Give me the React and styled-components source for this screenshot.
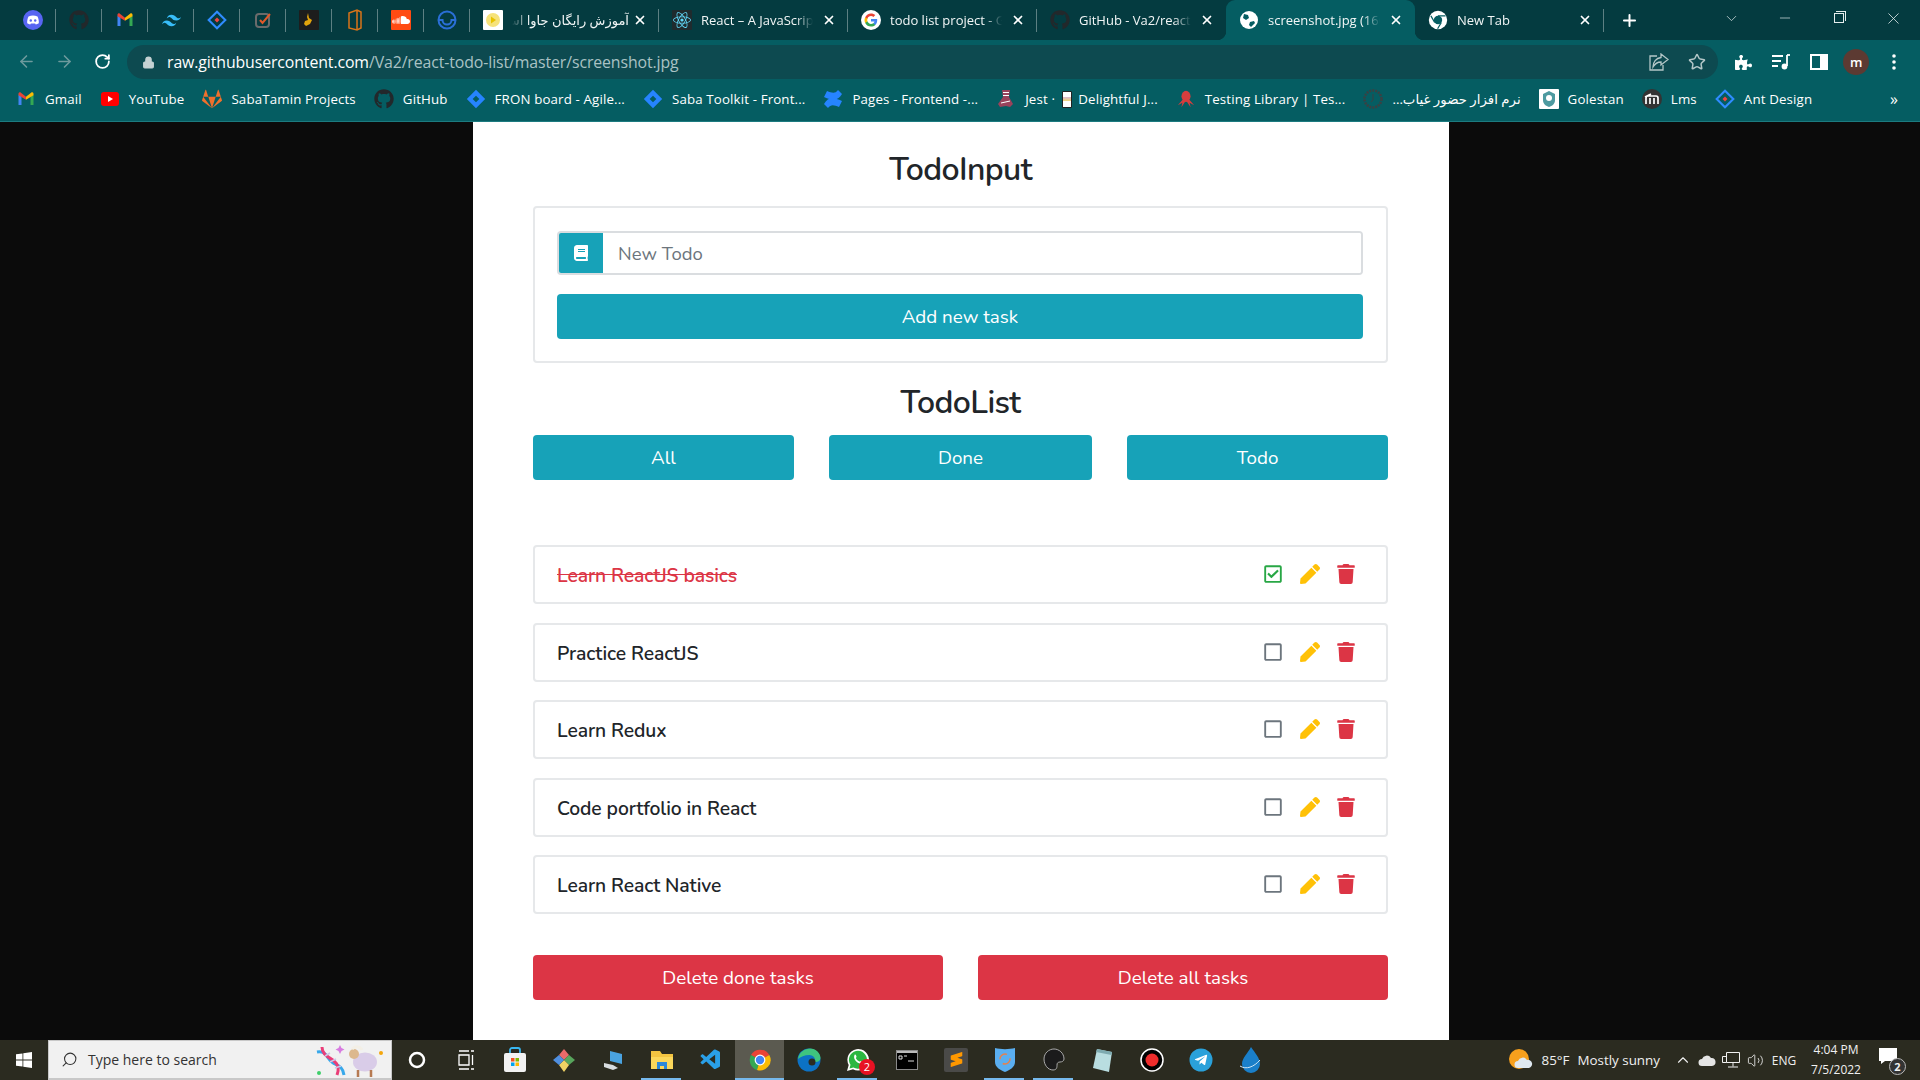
import React from 'react';
import styled, { createGlobalStyle, css } from 'styled-components';
import { FaBook, FaPen, FaTrash, FaRegSquare, FaRegCheckSquare, FaGithub, FaReact, FaGitlab, FaPuzzlePiece, FaTelegramPlane } from 'react-icons/fa';
import { SiTailwindcss, SiSoundcloud, SiSublimetext } from 'react-icons/si';
import { VscVscode } from 'react-icons/vsc';
import { ArrowLeft, ArrowRight, RotateCw, Lock, Star, Search, ChevronDown, ChevronUp, Minus, X, Plus, Volume2 } from 'lucide-react';

const GlobalStyle = createGlobalStyle`
  html, body { margin: 0; padding: 0; background: #0b0b0b; }
  #root { height: 1080px; overflow: hidden; }
  * { box-sizing: border-box; }
`;

const CHROME_FONT = `"Open Sans", "DejaVu Sans", sans-serif`;
const PAGE_FONT = `"Nunito", "Open Sans", sans-serif`;

const Screen = styled.div`
  display: flex;
  flex-direction: column;
  width: 1920px;
  height: 1080px;
  font-family: ${CHROME_FONT};
`;

/* ---------- tab strip ---------- */
const TabStrip = styled.div`
  display: flex;
  align-items: stretch;
  height: 40px;
  padding-left: 10px;
  background: #043b40;
  color: #fff;
`;

const Tab = styled.div`
  position: relative;
  display: flex;
  align-items: center;
  width: ${p => (p.$pinned ? '46px' : '189px')};
  justify-content: ${p => (p.$pinned ? 'center' : 'flex-start')};
  padding: ${p => (p.$pinned ? '0' : '0 12px 0 13px')};
  gap: 9px;
  ${p => p.$sep && css`
    &::after {
      content: '';
      position: absolute;
      right: 0;
      top: 9px;
      bottom: 8px;
      width: 1px;
      background: #5d8083;
    }
  `}
  ${p => p.$active && css`
    background: #055d62;
    border-radius: 9px 9px 0 0;
    &::before, &::after {
      content: '';
      position: absolute;
      bottom: 0;
      width: 9px;
      height: 9px;
    }
    &::before { left: -9px; background: radial-gradient(circle at 0 0, transparent 9px, #055d62 9.5px); }
    &::after { right: -9px; top: auto; background: radial-gradient(circle at 100% 0, transparent 9px, #055d62 9.5px); }
  `}
`;

const TabTitle = styled.span`
  flex: 1;
  min-width: 0;
  margin-right: ${p => (p.$rtl ? '-5px' : '0')};
  overflow: hidden;
  white-space: nowrap;
  font-size: 13px;
  color: #f2f6f6;
  text-align: ${p => (p.$rtl ? 'right' : 'left')};
  -webkit-mask-image: linear-gradient(to ${p => (p.$rtl ? 'left' : 'right')}, #000 85%, transparent 100%);
  mask-image: linear-gradient(to ${p => (p.$rtl ? 'left' : 'right')}, #000 85%, transparent 100%);
`;

const TabClose = styled(X)`
  flex: none;
  width: 14px;
  height: 14px;
  stroke-width: 3;
  color: #fff;
`;

const NewTabButton = styled.div`
  display: flex;
  align-items: center;
  justify-content: center;
  width: 50px;
  color: #fff;
`;

const WindowControls = styled.div`
  margin-left: auto;
  display: flex;
  align-items: stretch;
`;

const WindowButton = styled.div`
  display: flex;
  align-items: center;
  justify-content: center;
  width: 54px;
  padding-bottom: 4px;
  color: #e6eeee;
`;

const RestoreGlyph = styled.div`
  position: relative;
  width: 10px;
  height: 10px;
  border: 1px solid #e6eeee;
  &::after {
    content: '';
    position: absolute;
    top: -3px;
    right: -3px;
    width: 9px;
    height: 9px;
    border-top: 1px solid #e6eeee;
    border-right: 1px solid #e6eeee;
  }
`;

/* ---------- toolbar ---------- */
const Toolbar = styled.div`
  display: flex;
  align-items: center;
  height: 42px;
  padding: 2px 0 0 7px;
  background: #055d62;
  color: #fff;
`;

const NavButton = styled.div`
  display: flex;
  align-items: center;
  justify-content: center;
  width: 38px;
  padding-bottom: 1px;
  color: ${p => (p.$dim ? '#6e9a9d' : '#fff')};
`;

const AddressBar = styled.div`
  display: flex;
  align-items: center;
  width: 1591px;
  height: 34px;
  margin-left: 6px;
  padding: 0 12px 0 15px;
  border-radius: 17px;
  background: #0d4a50;
`;

const UrlText = styled.div`
  margin-left: 12px;
  font-size: 15.85px;
  letter-spacing: -0.1px;
  color: #a9c2c4;
  b { font-weight: 400; color: #fff; }
`;

const AddressActions = styled.div`
  margin-left: auto;
  display: flex;
  align-items: center;
  gap: 19px;
  color: #b4c7c8;
`;

const ToolGroup = styled.div`
  display: flex;
  align-items: center;
  margin-left: 7px;
`;

const ToolButton = styled.div`
  display: flex;
  align-items: center;
  justify-content: center;
  width: 37.5px;
  color: #fff;
`;

const Avatar = styled.div`
  display: flex;
  align-items: center;
  justify-content: center;
  width: 26px;
  height: 26px;
  border-radius: 50%;
  background: #5c3a32;
  font-size: 13px;
  font-weight: 600;
  color: #fff;
`;

/* ---------- bookmarks ---------- */
const BookmarkBar = styled.div`
  display: flex;
  align-items: center;
  height: 40px;
  padding: 0 19px 5px 16px;
  background: #055d62;
  border-bottom: 1px solid #1c7b80;
  color: #fff;
`;

const Bookmark = styled.div`
  display: flex;
  align-items: center;
  gap: 9px;
  margin-right: 18px;
  font-size: 13.3px;
  letter-spacing: 0.14px;
  white-space: nowrap;
`;

const BookmarkIcon = styled.span`
  display: flex;
  flex: none;
  align-items: center;
  justify-content: center;
  width: 20px;
  height: 20px;
`;

const MiniCard = styled.span`
  display: inline-block;
  width: 10px;
  height: 17px;
  margin: 0 3px;
  vertical-align: middle;
  background: linear-gradient(#fff 30%, #d8b6e0 30%, #f0d878 60%, #fff 60%);
  border: 1px solid #222;
  border-radius: 1px;
`;

const MoreBookmarks = styled.div`
  margin-left: auto;
  padding-right: 3px;
  font-size: 16px;
`;

/* ---------- page ---------- */
const Viewport = styled.div`
  flex: 1;
  min-height: 0;
  background: #0b0b0b;
`;

const Panel = styled.main`
  width: 976px;
  height: 100%;
  margin-left: 473px;
  padding: 0 61px 0 60px;
  background: #fff;
  font-family: ${PAGE_FONT};
  color: #212529;
`;

const Heading = styled.h2`
  margin: 0;
  height: ${p => p.$h}px;
  padding-top: ${p => p.$top}px;
  line-height: 48px;
  text-align: center;
  font-size: 32px;
  font-weight: 600;
  letter-spacing: -0.6px;
`;

const InputCard = styled.section`
  height: 157px;
  padding: 23px 23px 23px 22px;
  border: 2px solid #e6e8ea;
  border-radius: 4px;
`;

const InputRow = styled.div`
  display: flex;
  height: 44px;
  border: 2px solid #dadde0;
  border-radius: 4px;
  overflow: hidden;
`;

const InputIcon = styled.div`
  display: flex;
  align-items: center;
  justify-content: center;
  width: 44px;
  background: #17a2b8;
  color: #fff;
  font-size: 16px;
`;

const TodoField = styled.input`
  flex: 1;
  border: 0;
  outline: 0;
  padding: 2px 15px 0;
  font-family: inherit;
  font-size: 18.5px;
  color: #212529;
  &::placeholder { color: #6c757d; opacity: 1; }
`;

const ActionButton = styled.button`
  display: block;
  width: 100%;
  height: 45px;
  margin-top: ${p => p.$top || 0}px;
  border: 0;
  border-radius: 4px;
  background: ${p => (p.$danger ? '#dc3545' : '#17a2b8')};
  color: #fff;
  font-family: inherit;
  font-size: 18.8px;
  font-weight: 400;
`;

const FilterRow = styled.div`
  display: grid;
  grid-template-columns: 1fr 263px 1fr;
  gap: 35px;
`;

const TodoListBox = styled.ul`
  display: flex;
  flex-direction: column;
  gap: 18.5px;
  margin: 65px 0 0;
  padding: 0;
  list-style: none;
`;

const TodoRow = styled.li`
  display: flex;
  align-items: center;
  height: 59px;
  padding: 0 30px 0 22px;
  border: 2px solid #e6e8ea;
  border-radius: 4px;
`;

const TodoText = styled.span`
  padding-top: 2px;
  font-size: 19.3px;
  font-weight: 600;
  letter-spacing: -0.1px;
  color: ${p => (p.$done ? '#dc3545' : '#212529')};
  text-decoration: ${p => (p.$done ? 'line-through' : 'none')};
`;

const TodoActions = styled.div`
  margin-left: auto;
  display: flex;
  align-items: center;
  gap: 16.5px;
  padding-bottom: 1px;
  font-size: 20px;
`;

const TodoIcon = styled.span`
  display: flex;
  width: 20px;
  justify-content: center;
  color: ${p => p.$color};
`;

const DeleteRow = styled.div`
  display: flex;
  gap: 35px;
  margin-top: 41px;
`;

/* ---------- taskbar ---------- */
const Taskbar = styled.footer`
  display: flex;
  align-items: stretch;
  height: 40px;
  background: #2b2b20;
  color: #fff;
`;

const StartButton = styled.div`
  display: flex;
  align-items: center;
  justify-content: center;
  width: 48px;
`;

const SearchBox = styled.div`
  display: flex;
  align-items: center;
  width: 344px;
  padding: 0 7px 0 12px;
  background: #f1f1f1;
  border: 1px solid #c8c8c8;
  border-bottom-width: 2px;
  color: #333;
  font-size: 14px;
  gap: 10px;
`;

const SearchGlass = styled(Search)`
  transform: scaleX(-1);
`;

const SearchArt = styled.svg`
  margin-left: auto;
`;

const TaskApp = styled.div`
  position: relative;
  display: flex;
  align-items: center;
  justify-content: center;
  width: 49px;
  background: ${p => (p.$current ? '#5b5a50' : 'transparent')};
  ${p => p.$running && css`
    &::after {
      content: '';
      position: absolute;
      bottom: 0;
      height: 2px;
      left: ${p.$current ? 0 : '4px'};
      right: ${p.$current ? 0 : '5px'};
      background: #76b9ed;
    }
  `}
`;

const UnreadBadge = styled.span`
  position: absolute;
  right: 7px;
  bottom: 5px;
  width: 16px;
  height: 16px;
  border-radius: 50%;
  background: #e81123;
  font-size: 11px;
  line-height: 16px;
  text-align: center;
  color: #fff;
`;

const Tray = styled.div`
  margin-left: auto;
  display: flex;
  align-items: center;
  padding-right: 17px;
  font-size: 13.4px;
  color: #f0f0f0;
`;

const Weather = styled.div`
  display: flex;
  align-items: center;
  gap: 8px;
  margin-right: 11px;
  white-space: nowrap;
`;

const TrayIcon = styled.div`
  display: flex;
  justify-content: center;
  width: 24px;
`;

const TrayLang = styled.div`
  width: 34px;
  text-align: center;
  font-size: 12px;
`;

const Clock = styled.div`
  width: 68px;
  margin-left: 1px;
  text-align: center;
  font-size: 12px;
  line-height: 20px;
`;

const Notify = styled.div`
  position: relative;
  width: 24px;
  height: 24px;
  margin-left: 9px;
`;

const NotifyCount = styled.span`
  position: absolute;
  right: -3px;
  bottom: -3px;
  width: 17px;
  height: 17px;
  border-radius: 50%;
  border: 1px solid #bbb;
  background: #333;
  font-size: 11px;
  font-weight: 700;
  line-height: 15px;
  text-align: center;
`;

/* ---------- drawn favicons ---------- */
const GmailIcon = ({ size = 18 }) => (
  <svg width={size} height={size} viewBox="0 0 24 24">
    <path d="M2 20V6l4 3v11z" fill="#4285f4" />
    <path d="M18 20V9l4-3v14z" fill="#34a853" />
    <path d="M2 7V5c0-1.600 1.900-2.500 3.200-1.500L12 9v4z" fill="#ea4335" />
    <path d="M22 7V5c0-1.600-1.900-2.500-3.200-1.500L12 9v4z" fill="#fbbc04" />
  </svg>
);

const GoogleIcon = () => (
  <svg width="20" height="20" viewBox="0 0 20 20">
    <circle cx="10" cy="10" r="10" fill="#fff" />
    <path d="M16.200 10.200c0-.5 0-.9-.1-1.300H10v2.500h3.500c-.2.800-.6 1.400-1.300 1.900v1.600h2.100c1.200-1.100 1.900-2.800 1.900-4.700z" fill="#4285f4" />
    <path d="M10 16.500c1.700 0 3.200-.6 4.300-1.600l-2.100-1.600c-.6.400-1.300.6-2.200.6-1.700 0-3.100-1.100-3.600-2.600H4.200v1.600c1.100 2.200 3.300 3.600 5.800 3.600z" fill="#34a853" />
    <path d="M6.400 11.300c-.3-.8-.3-1.700 0-2.500V7.200H4.200c-.9 1.800-.9 3.900 0 5.700z" fill="#fbbc05" />
    <path d="M10 6.100c.9 0 1.800.3 2.400.9l1.900-1.900C13.200 4 11.700 3.500 10 3.500c-2.500 0-4.700 1.400-5.800 3.700l2.200 1.600C6.900 7.200 8.300 6.100 10 6.100z" fill="#ea4335" />
  </svg>
);

const ChromeIcon = ({ size = 20, mono }) => (
  <svg width={size} height={size} viewBox="0 0 24 24">
    {mono ? (
      <>
        <circle cx="12" cy="12" r="11" fill="#fff" />
        <circle cx="12" cy="12" r="5" fill="#055d62" />
        <path d="M12 7h9M8 15L3.500 7M16 15l-4.500 7.500" stroke="#055d62" strokeWidth="1.500" />
      </>
    ) : (
      <>
        <path d="M12 12L3 7a10.500 10.500 0 0 1 18.300 0z" fill="#ea4335" />
        <path d="M12 12L3 7a10.500 10.500 0 0 0 6 15z" fill="#34a853" />
        <path d="M12 12l9.300-5A10.500 10.500 0 0 1 9 22z" fill="#fbbc05" />
        <circle cx="12" cy="12" r="5.400" fill="#fff" />
        <circle cx="12" cy="12" r="4.200" fill="#4285f4" />
      </>
    )}
  </svg>
);

const GlobeIcon = () => (
  <svg width="20" height="20" viewBox="0 0 20 20">
    <circle cx="10" cy="10" r="9" fill="#fff" />
    <path d="M5 4l4 1 1 3-3 2-3-2zM11 12l4-1 1 2-4 4-2-2z" fill="#055d62" />
  </svg>
);

const DiamondIcon = ({ size = 20, color = '#2684ff', dot }) => (
  <svg width={size} height={size} viewBox="0 0 24 24">
    {dot ? (
      <>
        <path d="M12 2L2 12l10 10 10-10z" fill="none" stroke="#2f8cff" strokeWidth="2.500" />
        <path d="M9 12l3-3 3 3-3 3z" fill="#ef4444" />
      </>
    ) : (
      <path d="M12 1L1 12l11 11 11-11zM12 8l4 4-4 4-4-4z" fill={color} fillRule="evenodd" />
    )}
  </svg>
);

const TileIcon = ({ bg, children, size = 20 }) => (
  <svg width={size} height={size} viewBox="0 0 20 20">
    <rect width="20" height="20" rx="1" fill={bg} />
    {children}
  </svg>
);

const favicons = {
  discord: (
    <svg width="20" height="20" viewBox="0 0 20 20">
      <circle cx="10" cy="10" r="10" fill="#5865f2" />
      <path d="M5.500 6.500c3-1.300 6-1.300 9 0 1 2 1.500 4.500 1.300 6.800-1 .7-2 1.100-3 1.300l-.7-1.100h-4.200l-.7 1.100c-1-.2-2-.6-3-1.300-.2-2.300.3-4.800 1.300-6.800z" fill="#fff" />
      <circle cx="7.800" cy="10.500" r="1.200" fill="#5865f2" />
      <circle cx="12.200" cy="10.500" r="1.200" fill="#5865f2" />
    </svg>
  ),
  github: <FaGithub size={20} color="#22282b" />,
  gmail: <GmailIcon />,
  tailwind: <SiTailwindcss size={19} color="#38bdf8" />,
  ant: <DiamondIcon dot />,
  task: (
    <svg width="18" height="18" viewBox="0 0 18 18" fill="none">
      <rect x="2" y="3" width="13" height="13" rx="3" stroke="#6b6b6b" strokeWidth="2" />
      <path d="M6 9l2.500 3L16 3" stroke="#e0592a" strokeWidth="2" />
    </svg>
  ),
  music: (
    <TileIcon bg="#1d1d1d">
      <path d="M9 3l1 5 3 2-2 4-4 2-2-2 1-3 3-1-1-3z" fill="#e2a50c" />
    </TileIcon>
  ),
  clip: (
    <svg width="20" height="22" viewBox="0 0 20 22" fill="none" stroke="#d97418" strokeWidth="1.500">
      <path d="M4 4l8-3 4 2v16l-4 2-8-2zM12 1v20" />
    </svg>
  ),
  soundcloud: (
    <TileIcon bg="#ff4b12">
      <SiSoundcloud x="1" y="1" size={18} color="#fff" />
    </TileIcon>
  ),
  ring: (
    <svg width="20" height="20" viewBox="0 0 20 20" fill="none" stroke="#2a6fd6" strokeWidth="2">
      <circle cx="10" cy="10" r="8.500" />
      <path d="M1.500 10h4a4.500 4.500 0 0 0 9 0h4" />
    </svg>
  ),
  star: (
    <TileIcon bg="#fff">
      <circle cx="10" cy="10" r="7" fill="#f6e27a" />
      <path d="M8 6.500l5 3.500-5 3.500z" fill="#e8c200" />
    </TileIcon>
  ),
  react: (
    <TileIcon bg="#1f2b2e">
      <FaReact x="1" y="1" size={18} color="#61dafb" />
    </TileIcon>
  ),
  google: <GoogleIcon />,
  globe: <GlobeIcon />,
  chromeMono: <ChromeIcon mono />,
  youtube: (
    <svg width="18" height="14" viewBox="0 0 18 14">
      <rect width="18" height="14" rx="3" fill="#f00" />
      <path d="M7 4l5 3-5 3z" fill="#fff" />
    </svg>
  ),
  gitlab: <FaGitlab size={20} color="#f0702c" />,
  jira: <DiamondIcon />,
  pages: (
    <svg width="20" height="20" viewBox="0 0 20 20" fill="#2684ff">
      <path d="M1 15c4-7 9-7 18-3l-3 6c-5-2-8-3-11 1zM19 5c-4 7-9 7-18 3l3-6c5 2 8 3 11-1z" />
    </svg>
  ),
  jest: (
    <svg width="18" height="20" viewBox="0 0 18 20">
      <path d="M5 1h8l-1 7 4 7-3 3-4-1-6 1-2-3 5-7z" fill="#99425b" />
      <path d="M6 3.500h6M6 6.500h6M4 14l9-2" stroke="#fff" />
    </svg>
  ),
  octopus: (
    <svg width="22" height="20" viewBox="0 0 22 20" fill="#d63d3d">
      <ellipse cx="11" cy="7" rx="5" ry="6" />
      <path d="M7 11l-5 6 5-3-1 5 4-6h2l4 6-1-5 5 3-5-6z" />
    </svg>
  ),
  clockDark: (
    <svg width="20" height="20" viewBox="0 0 20 20" fill="none">
      <circle cx="10" cy="10" r="8.500" stroke="#3a4143" strokeWidth="2.500" strokeDasharray="2 1" />
      <path d="M10 5v6l-2 2" stroke="#3a4143" />
    </svg>
  ),
  golestan: (
    <TileIcon bg="#fff">
      <path d="M10 2l6 3v6c0 4-3 6-6 7-3-1-6-3-6-7V5z" fill="#4d9aa0" />
      <circle cx="10" cy="9" r="3" fill="#fff" />
    </TileIcon>
  ),
  moodle: (
    <svg width="20" height="20" viewBox="0 0 20 20">
      <circle cx="10" cy="10" r="10" fill="#333" />
      <path d="M4 15V9c0-1 1-2 2-2h8c1 0 2 1 2 2v6M8 15V9M12 15V9M3 8l6-3" stroke="#fff" strokeWidth="1.700" fill="none" />
    </svg>
  ),
};

/* ---------- taskbar art ---------- */
const WindowsLogo = () => (
  <svg width="16" height="16" viewBox="0 0 16 16" fill="#fff">
    <path d="M0 2.300l6.500-.9v6.200H0zM7.300 1.300L16 0v7.600H7.300zM0 8.400h6.500v6.200L0 13.700zM7.300 8.400H16V16l-8.700-1.200z" />
  </svg>
);

const taskApps = [
  { key: 'cortana', icon: <svg width="18" height="18"><circle cx="9" cy="9" r="7" fill="none" stroke="#fff" strokeWidth="2.500" /></svg> },
  { key: 'view', icon: (
    <svg width="18" height="20" fill="none" stroke="#fff" strokeWidth="1.300">
      <path d="M2 5h10v10H2zM14 1h3M14 19h3M15.500 5v10M2 1h10M2 19h10" />
    </svg>
  ) },
  { key: 'store', icon: (
    <svg width="24" height="26" viewBox="0 0 24 26">
      <path d="M7 6V3a2 2 0 0 1 2-2h6a2 2 0 0 1 2 2v3" fill="none" stroke="#38b6f0" strokeWidth="1.800" />
      <rect x="1" y="6" width="22" height="19" rx="2" fill="#f2f2f2" />
      <path d="M8 11h3.500v3.500H8z" fill="#f25022" /><path d="M12.500 11H16v3.500h-3.500z" fill="#7fba00" />
      <path d="M8 15.500h3.500V19H8z" fill="#00a4ef" /><path d="M12.500 15.500H16V19h-3.500z" fill="#ffb900" />
    </svg>
  ) },
  { key: 'kraken', icon: (
    <svg width="24" height="26" viewBox="0 0 24 26">
      <path d="M12 13L7 8l5-6 5 6z" fill="#ea6a6a" /><path d="M12 13l5-5 6 5-6 5z" fill="#58a55c" />
      <path d="M12 13l5 5-5 7-5-7z" fill="#f0d264" /><path d="M12 13L7 18l-6-5 6-5z" fill="#4f8fe0" />
    </svg>
  ) },
  { key: 'pc', icon: (
    <svg width="24" height="24" viewBox="0 0 24 24">
      <path d="M9 3l12 3v10L9 13z" fill="#4aa3e0" /><path d="M3 15l9 2 5 3-5 2-9-3z" fill="#d8dde0" />
    </svg>
  ) },
  { key: 'files', running: true, icon: (
    <svg width="24" height="22" viewBox="0 0 24 22">
      <path d="M1 2h9l2 3h11v15H1z" fill="#f3c441" /><path d="M1 8h22v12H1z" fill="#fbd75b" />
      <path d="M7 13h10v7h-3v-3h-4v3H7z" fill="#2c88d9" />
    </svg>
  ) },
  { key: 'vscode', icon: <VscVscode size={24} color="#2aa0e8" /> },
  { key: 'chrome', current: true, running: true, icon: <ChromeIcon size={24} /> },
  { key: 'edge', icon: (
    <svg width="24" height="24" viewBox="0 0 24 24">
      <circle cx="12" cy="12" r="11.500" fill="#0c72c4" />
      <path d="M1 11C2 4 8 .5 13 .5c6 0 10.500 5 10.500 9.500 0 3-3 4.500-6 4 2-3-1-7-5-7-5 0-9 2-11.500 4z" fill="#3fc47e" />
      <circle cx="15" cy="14" r="3.500" fill="#2b2b20" />
    </svg>
  ) },
  { key: 'whatsapp', running: true, badge: '2', icon: (
    <svg width="24" height="24" viewBox="0 0 24 24">
      <path d="M1 23l1.700-6A10.800 10.800 0 1 1 7 21.300z" fill="#fff" />
      <path d="M3.500 20.500l1-3.700A9 9 0 1 1 7.400 19.500z" fill="#2bb741" />
      <path d="M8.500 7c1-1 1.500 0 2 1.500.2.800-.8 1.300-.6 1.800a7 7 0 0 0 3.500 3.300c.6.200 1-.9 1.700-.7 1.500.5 2.500 1 1.700 2.200-2 2.500-10.800-2.500-8.300-8.100z" fill="#fff" />
    </svg>
  ) },
  { key: 'cmd', icon: (
    <svg width="22" height="22" viewBox="0 0 22 22">
      <rect x=".5" y="1.500" width="21" height="19" fill="#000" stroke="#8a8a8a" />
      <path d="M1 2h20v2H1z" fill="#bbb" /><path d="M3 7h3v3H3zM8 7h3M12 12h6" stroke="#ddd" fill="none" />
    </svg>
  ) },
  { key: 'sublime', icon: (
    <svg width="24" height="24" viewBox="0 0 24 24">
      <rect width="24" height="24" rx="2" fill="#4a4a48" />
      <SiSublimetext x="5" y="4" size={15} color="#ff9800" />
    </svg>
  ) },
  { key: 'shield', running: true, icon: (
    <svg width="22" height="26" viewBox="0 0 22 26">
      <path d="M1 1c6 1.500 14 1.500 20 0v14c0 5-5 8-10 10C6 23 1 20 1 15z" fill="#5aaef0" />
      <circle cx="11" cy="12" r="5" fill="none" stroke="#e8804a" strokeWidth="1.500" strokeDasharray="10 5" />
    </svg>
  ) },
  { key: 'obs', running: true, icon: (
    <svg width="24" height="26" viewBox="0 0 24 26">
      <path d="M12 2c5 0 10 4 10 10 0 2-2 3-4 3s-3 1-3 3 0 5-4 5C6 23 2 18 2 12 2 6 7 2 12 2z" fill="#1b1b1b" stroke="#aaa" />
    </svg>
  ) },
  { key: 'notes', icon: (
    <svg width="24" height="26" viewBox="0 0 24 26">
      <path d="M6 2l15 3-3 20-16-4z" fill="#b9dde0" /><path d="M6 2l15 3-.5 3L5 5z" fill="#7eaab0" />
    </svg>
  ) },
  { key: 'record', icon: (
    <svg width="24" height="24"><circle cx="12" cy="12" r="11" fill="#000" stroke="#fff" strokeWidth="1.500" /><circle cx="12" cy="12" r="6.500" fill="#ee2c2c" /></svg>
  ) },
  { key: 'telegram', icon: (
    <svg width="24" height="24" viewBox="0 0 24 24">
      <circle cx="12" cy="12" r="11.500" fill="#2aa1da" />
      <FaTelegramPlane x="5" y="5" size={14} color="#fff" />
    </svg>
  ) },
  { key: 'drop', icon: (
    <svg width="24" height="28" viewBox="0 0 24 28">
      <path d="M13 1c4 6 9 11 9 17a9 9 0 0 1-18 0C4 12 10 7 13 1z" fill="#1a7fc9" />
      <path d="M2 20c6 4 14 1 20-6" stroke="#cfe6f5" fill="none" />
    </svg>
  ) },
];

const tabs = [
  { icon: 'discord' }, { icon: 'github' }, { icon: 'gmail' }, { icon: 'tailwind' }, { icon: 'ant' },
  { icon: 'task' }, { icon: 'music' }, { icon: 'clip' }, { icon: 'soundcloud' }, { icon: 'ring' },
];

const fullTabs = [
  { icon: 'star', title: 'آموزش رایگان جاوا اسکریپت', rtl: true, sep: true },
  { icon: 'react', title: 'React – A JavaScript library', sep: true },
  { icon: 'google', title: 'todo list project - Google', sep: true },
  { icon: 'github', title: 'GitHub - Va2/react-todo-list' },
  { icon: 'globe', title: 'screenshot.jpg (1600×900)', active: true },
  { icon: 'chromeMono', title: 'New Tab', sep: true },
];

const bookmarks = [
  { icon: 'gmail', label: 'Gmail' },
  { icon: 'youtube', label: 'YouTube' },
  { icon: 'gitlab', label: 'SabaTamin Projects' },
  { icon: 'github', label: 'GitHub' },
  { icon: 'jira', label: 'FRON board - Agile...' },
  { icon: 'jira', label: 'Saba Toolkit - Front...' },
  { icon: 'pages', label: 'Pages - Frontend -...' },
  { icon: 'jest', label: <>Jest · <MiniCard /> Delightful J...</> },
  { icon: 'octopus', label: 'Testing Library | Tes...' },
  { icon: 'clockDark', label: 'نرم افزار حضور غیاب...', rtl: true },
  { icon: 'golestan', label: 'Golestan' },
  { icon: 'moodle', label: 'Lms' },
  { icon: 'ant', label: 'Ant Design' },
];

const todos = [
  { text: 'Learn ReactJS basics', done: true },
  { text: 'Practice ReactJS' },
  { text: 'Learn Redux' },
  { text: 'Code portfolio in React' },
  { text: 'Learn React Native' },
];

export default function App() {
  return (
    <Screen>
      <GlobalStyle />
      <TabStrip>
        {tabs.map((t, i) => (
          <Tab key={i} $pinned $sep>{favicons[t.icon]}</Tab>
        ))}
        {fullTabs.map(t => (
          <Tab key={t.title} $sep={t.sep} $active={t.active}>
            {favicons[t.icon]}
            <TabTitle $rtl={t.rtl} dir={t.rtl ? 'rtl' : undefined}>{t.title}</TabTitle>
            <TabClose />
          </Tab>
        ))}
        <NewTabButton><Plus size={19} strokeWidth={2.5} /></NewTabButton>
        <WindowControls>
          <WindowButton><ChevronDown size={17} strokeWidth={1} /></WindowButton>
          <WindowButton><Minus size={16} strokeWidth={1} /></WindowButton>
          <WindowButton><RestoreGlyph /></WindowButton>
          <WindowButton><X size={19} strokeWidth={1} /></WindowButton>
        </WindowControls>
      </TabStrip>

      <Toolbar>
        <NavButton $dim><ArrowLeft size={19} /></NavButton>
        <NavButton $dim><ArrowRight size={19} /></NavButton>
        <NavButton><RotateCw size={17} strokeWidth={2.5} /></NavButton>
        <AddressBar>
          <Lock size={13} color="#c5d2d3" fill="#c5d2d3" />
          <UrlText><b>raw.githubusercontent.com</b>/Va2/react-todo-list/master/screenshot.jpg</UrlText>
          <AddressActions>
            <svg width="20" height="18" viewBox="0 0 20 18" fill="none" stroke="currentColor" strokeWidth="1.300">
              <path d="M8 3H1v14h13v-5" />
              <path d="M12 1l7 5.500-7 5.500V9c-4 0-6 1.500-8 5 0-5 3-9 8-9.500z" />
            </svg>
            <Star size={18} strokeWidth={2} />
          </AddressActions>
        </AddressBar>
        <ToolGroup>
          <ToolButton><FaPuzzlePiece size={17} /></ToolButton>
          <ToolButton>
            <svg width="18" height="16" viewBox="0 0 18 16" fill="none" stroke="#fff" strokeWidth="1.800">
              <path d="M0 2h11M0 7h9M0 12h6M15 1v11" /><circle cx="12.500" cy="12.500" r="2" fill="#fff" /><path d="M15 1h3" />
            </svg>
          </ToolButton>
          <ToolButton>
            <svg width="18" height="16" viewBox="0 0 18 16"><path d="M0 0h18v16H0z" fill="#fff" /><path d="M2 2h8v12H2z" fill="#055d62" /></svg>
          </ToolButton>
          <ToolButton><Avatar>m</Avatar></ToolButton>
          <ToolButton>
            <svg width="4" height="16" fill="#fff"><circle cx="2" cy="2" r="1.800" /><circle cx="2" cy="8" r="1.800" /><circle cx="2" cy="14" r="1.800" /></svg>
          </ToolButton>
        </ToolGroup>
      </Toolbar>

      <BookmarkBar>
        {bookmarks.map((b, i) => (
          <Bookmark key={i}>
            <BookmarkIcon>{favicons[b.icon]}</BookmarkIcon>
            <span dir={b.rtl ? 'rtl' : undefined}>{b.label}</span>
          </Bookmark>
        ))}
        <MoreBookmarks>»</MoreBookmarks>
      </BookmarkBar>

      <Viewport>
        <Panel>
          <Heading $h={84} $top={24}>TodoInput</Heading>
          <InputCard>
            <InputRow>
              <InputIcon><FaBook /></InputIcon>
              <TodoField placeholder="New Todo" />
            </InputRow>
            <ActionButton $top={19}>Add new task</ActionButton>
          </InputCard>
          <Heading $h={72} $top={16}>TodoList</Heading>
          <FilterRow>
            <ActionButton>All</ActionButton>
            <ActionButton>Done</ActionButton>
            <ActionButton>Todo</ActionButton>
          </FilterRow>
          <TodoListBox>
            {todos.map(t => (
              <TodoRow key={t.text}>
                <TodoText $done={t.done}>{t.text}</TodoText>
                <TodoActions>
                  <TodoIcon $color={t.done ? '#28a745' : '#6c757d'}>
                    {t.done ? <FaRegCheckSquare /> : <FaRegSquare />}
                  </TodoIcon>
                  <TodoIcon $color="#ffc107"><FaPen /></TodoIcon>
                  <TodoIcon $color="#dc3545"><FaTrash /></TodoIcon>
                </TodoActions>
              </TodoRow>
            ))}
          </TodoListBox>
          <DeleteRow>
            <ActionButton $danger>Delete done tasks</ActionButton>
            <ActionButton $danger>Delete all tasks</ActionButton>
          </DeleteRow>
        </Panel>
      </Viewport>

      <Taskbar>
        <StartButton><WindowsLogo /></StartButton>
        <SearchBox>
          <SearchGlass size={17} strokeWidth={1.5} />
          Type here to search
          <SearchArt width="68" height="36" viewBox="0 0 68 36">
            <path d="M1 10c10-2 10 8 16 11s10 4 11 12" fill="none" stroke="#38a8ea" strokeWidth="3" />
            <path d="M6 5c0 8 7 10 12 14s5 8 3 14" fill="none" stroke="#ea3d78" strokeWidth="3" />
            <path d="M9 14l5-3M14 20l6-3M19 26l6-2" stroke="#c9c9e8" strokeWidth="1.500" />
            <path d="M24 3l1.500 3 3 1.500-3 1.500L24 12l-1.500-3-3-1.500 3-1.500z" fill="#d77be0" />
            <circle cx="3" cy="31" r="2" fill="#3ecf6a" />
            <ellipse cx="49" cy="20" rx="12" ry="9.500" fill="#d9cce8" />
            <circle cx="38" cy="12" r="5" fill="#dcb88e" />
            <path d="M36 7c3-3 8-3 10 1" fill="none" stroke="#f3efe6" strokeWidth="3" />
            <path d="M42 28v7M55 28v7" stroke="#b67a52" strokeWidth="2.500" />
            <circle cx="65" cy="11" r="2" fill="#f4a60c" />
          </SearchArt>
        </SearchBox>
        {taskApps.map(app => (
          <TaskApp key={app.key} $running={app.running} $current={app.current}>
            {app.icon}
            {app.badge && <UnreadBadge>{app.badge}</UnreadBadge>}
          </TaskApp>
        ))}
        <Tray>
          <Weather>
            <svg width="24" height="24" viewBox="0 0 24 24">
              <circle cx="10" cy="11" r="10" fill="#f7a01d" />
              <path d="M9 20a3.500 3.500 0 0 1 0-7 5 5 0 0 1 9-1 4 4 0 0 1 2 8z" fill="#dfe8f0" />
            </svg>
            <span>85°F</span>
            <span>Mostly sunny</span>
          </Weather>
          <TrayIcon><ChevronUp size={18} strokeWidth={1.5} /></TrayIcon>
          <TrayIcon>
            <svg width="18" height="12" viewBox="0 0 18 12"><path d="M4 12a3.500 3.500 0 0 1 0-7 5 5 0 0 1 9-1 4 4 0 0 1 1 8z" fill="#e4e4e4" /></svg>
          </TrayIcon>
          <TrayIcon>
            <svg width="18" height="16" viewBox="0 0 18 16" fill="none" stroke="#f0f0f0">
              <path d="M4.500 .5h13v10h-13zM.5 4.500h4M.5 4.500v6h4M11 10.500v4M6 15h10" />
            </svg>
          </TrayIcon>
          <TrayIcon><Volume2 size={17} strokeWidth={1.2} /></TrayIcon>
          <TrayLang>ENG</TrayLang>
          <Clock>4:04 PM<br />7/5/2022</Clock>
          <Notify>
            <svg width="18" height="16" viewBox="0 0 18 16"><path d="M0 0h18v13H6l-4 3v-3H0z" fill="#fff" /></svg>
            <NotifyCount>2</NotifyCount>
          </Notify>
        </Tray>
      </Taskbar>
    </Screen>
  );
}
